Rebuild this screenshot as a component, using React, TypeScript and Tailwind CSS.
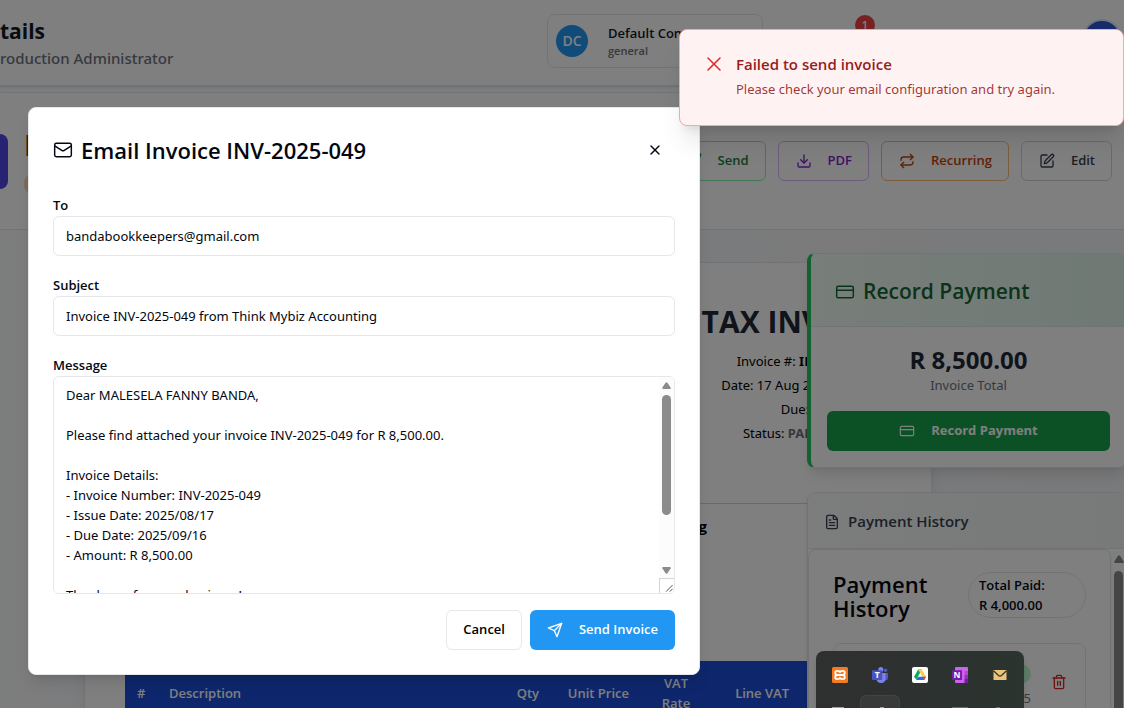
import React from "react";
import { CreditCard, Download, FileText, Mail, Repeat, SquarePen, Trash2, X } from "lucide-react";

const message = `Dear MALESELA FANNY BANDA,

Please find attached your invoice INV-2025-049 for R 8,500.00.

Invoice Details:
- Invoice Number: INV-2025-049
- Issue Date: 2025/08/17
- Due Date: 2025/09/16
- Amount: R 8,500.00

Thank you for your business!

Best regards`;

function SendIcon({ className }: { className?: string }) {
  return (
    <svg viewBox="0 0 24 24" fill="none" stroke="currentColor" strokeWidth="2" strokeLinecap="round" strokeLinejoin="round" className={className} aria-hidden="true">
      <path d="m22 2-7 20-4-9-9-4Z" />
      <path d="M22 2 11 13" />
    </svg>
  );
}

function Header() {
  return (
    <header className="flex h-[86px] items-start justify-between border-b border-gray-200 bg-white shadow-sm">
      <div className="pt-4">
        <h1 className="text-[21px] leading-[30px] font-bold text-[#111827]">tails</h1>
        <p className="font-['Noto_Sans'] text-[15px] leading-6 font-medium text-[#6b7280]">roduction Administrator</p>
      </div>
      <div className="flex items-start">
        <button type="button" className="mt-3.5 mr-[92px] flex h-[54px] w-[216px] items-center gap-5 rounded-lg border border-gray-200 px-2 text-left">
          <span className="flex size-8 items-center justify-center rounded-full bg-[#2196f3] text-sm font-semibold text-white">DC</span>
          <span className="block">
            <span className="block text-[13px] leading-5 font-semibold text-[#111827]">Default Company</span>
            <span className="block text-[11px] leading-4 font-semibold text-[#6b7280]">general</span>
          </span>
        </button>
        <span className="mt-[15px] flex size-5 items-center justify-center rounded-full bg-[#ef4444] text-[11px] font-semibold text-white">1</span>
        <span className="mt-[25px] ml-[25px] w-[184px] text-[13px] leading-5 font-semibold text-[#111827]">Production Administrator</span>
        <span className="mt-[21px] mr-1 size-9 rounded-full bg-[#2f55d4] ring-2 ring-blue-100" />
      </div>
    </header>
  );
}

function Toolbar() {
  const base = "flex h-10 items-center gap-4 rounded-md border pr-4 pl-[17px] text-[13px] font-semibold";
  return (
    <section className="mt-1.5 flex h-[138px] items-start justify-between border-y border-gray-200 bg-white">
      <div className="flex gap-4 pt-[41px]">
        <span className="h-[55px] w-2 rounded-r-xl bg-[#4f46e5]" />
        <div>
          <p className="text-[28px] leading-[22px] font-bold text-[#7c3d12]">INV</p>
          <span className="mt-4 block h-6 w-16 rounded-full bg-[#fed7aa]" />
        </div>
      </div>
      <div className="mt-12 mr-3 flex gap-3">
        <button type="button" className={`${base} border-[#86efac] text-[#15803d]`}>
          <SendIcon className="size-4" />Send
        </button>
        <button type="button" className={`${base} border-[#d8b4fe] text-[#7e22ce]`}>
          <Download className="size-4" />PDF
        </button>
        <button type="button" className={`${base} border-[#fdba74] text-[#c2410c]`}>
          <Repeat className="size-4" />Recurring
        </button>
        <button type="button" className={`${base} border-[#d1d5db] text-[#374151]`}>
          <SquarePen className="size-4" />Edit
        </button>
      </div>
    </section>
  );
}

function InvoicePaper() {
  return (
    <article className="-mr-[125px] ml-[84px] h-[520px] border border-gray-200 bg-white px-10 pt-11 shadow-lg">
      <div className="h-[196px] text-right text-[13px] leading-6 text-black">
        <h2 className="mb-3 text-[30px] leading-[30px] font-bold text-[#1f2937]">TAX INVOICE</h2>
        <div className="font-['Noto_Sans']">
          <p>Invoice #: <span className="font-bold">INV-2025-0049</span></p>
          <p>Date: 17 Aug 2025, 02:00:00</p>
          <p>Due: 16 Sept 2025</p>
          <p>Status: <span className="font-bold text-[#6b7280]">PARTIALLY PAID</span></p>
        </div>
      </div>
      <div className="-mx-10 h-[158px] border-t border-gray-300 pt-3 pr-[224px] text-right text-[15px] leading-5 font-bold text-black">
        Think Mybiz Accounting
      </div>
      <table className="w-full table-fixed bg-[#1d4ed8] text-[13px] leading-5 font-semibold text-white">
        <thead>
          <tr className="h-16">
            <th className="w-8 pl-3 text-left font-semibold">#</th>
            <th className="pl-3 text-left font-semibold">Description</th>
            <th className="w-[70px] pr-3 text-right font-semibold">Qty</th>
            <th className="w-[90px] pr-3 text-right font-semibold">Unit Price</th>
            <th className="w-[70px] px-4 text-center font-semibold">VAT Rate</th>
            <th className="w-[90px] pr-3 text-right font-semibold">Line VAT</th>
            <th className="w-[90px] pr-3 text-right font-semibold">Total</th>
          </tr>
        </thead>
      </table>
    </article>
  );
}

function PaymentSidebar() {
  return (
    <aside className="relative -mt-[9px] -mr-[3px] w-[320px] shrink-0">
      <section className="overflow-hidden rounded-lg border border-l-4 border-gray-200 border-l-[#22c55e] bg-white shadow-lg">
        <h2 className="flex h-[73px] items-center gap-2 border-b border-gray-200 bg-linear-to-r from-[#f0fdf4] to-[#dff3e9] pt-1 pl-6 text-[21px] font-semibold text-[#166534]">
          <CreditCard className="size-5" strokeWidth={1.75} />Record Payment
        </h2>
        <div className="px-4 pt-[18px] pb-4 text-center">
          <p className="text-[24px] leading-[30px] font-bold text-[#1f2937]">R 8,500.00</p>
          <p className="font-['Noto_Sans'] text-[13px] leading-5 text-[#6b7280]">Invoice Total</p>
          <button type="button" className="mt-4 flex h-10 w-full items-center justify-center gap-4 rounded-md bg-[#18a34a] text-[13px] font-bold text-white">
            <CreditCard className="size-4" strokeWidth={1.75} />Record Payment
          </button>
        </div>
      </section>
      <section className="mt-6 h-[240px] overflow-hidden rounded-lg border border-gray-200 bg-white shadow-md">
        <h2 className="flex h-14 items-center gap-2 border-b border-gray-200 bg-linear-to-r from-[#f8faf9] to-[#eff5f3] pt-0.5 pl-4 text-[15px] font-semibold text-[#374151]">
          <FileText className="size-4" />Payment History
        </h2>
        <div className="flex">
          <div className="h-[200px] flex-1 rounded-lg border border-gray-200 px-6 pt-[22px] shadow-sm">
            <div className="flex items-start justify-between">
              <h3 className="w-24 text-[22px] leading-6 font-semibold text-gray-950">Payment History</h3>
              <span className="w-[118px] rounded-full border border-gray-200 px-2.5 py-0.5 text-[13px] leading-5 font-semibold text-gray-950">
                Total Paid:<br />R 4,000.00
              </span>
            </div>
            <div className="mt-[23px] flex h-28 items-start rounded-lg border border-gray-200 pt-5">
              <div className="w-[197px] text-right text-[13px] leading-5 text-[#6b7280]">
                <span className="ml-auto block h-5 w-20 rounded-full bg-[#bbf7d0]" />
                <span className="mt-1 block">17/08/2025</span>
              </div>
              <button type="button" aria-label="Delete payment" className="mt-2.5 ml-5 text-[#dc2626]">
                <Trash2 className="size-4" />
              </button>
            </div>
          </div>
          <div className="flex w-[15px] flex-col items-center gap-2 pt-1.5" aria-hidden="true">
            <svg viewBox="0 0 10 8" className="h-2 w-2.5 fill-[#8b8b8b]"><path d="M4 .8Q5-.4 6 .8l3.7 5.6Q10 8 9 8H1Q0 8 .3 6.400Z" /></svg>
            <span className="h-48 w-[9px] rounded-full bg-[#8b8b8b]" />
          </div>
        </div>
      </section>
    </aside>
  );
}

function EmailDialog() {
  const field = "h-10 w-full rounded-md border border-gray-200 bg-white px-3 font-['Noto_Sans'] text-[13px] text-gray-950 outline-none";
  const label = "block h-6 text-[13px] leading-[26px] font-semibold";
  return (
    <div role="dialog" aria-labelledby="email-title" className="absolute top-[107px] left-7 w-[672px] rounded-lg border border-gray-200 bg-white p-6 text-gray-950 shadow-lg">
      <div className="flex h-9 items-center justify-between">
        <h2 id="email-title" className="flex items-center gap-2 text-[22px] leading-10 font-semibold">
          <Mail className="size-5" strokeWidth={1.75} />Email Invoice INV-2025-049
        </h2>
        <button type="button" aria-label="Close" className="flex size-10 items-center justify-center">
          <X className="size-4" />
        </button>
      </div>
      <form className="mt-6 space-y-4" onSubmit={(e) => e.preventDefault()}>
        <div>
          <label htmlFor="to" className={label}>To</label>
          <input id="to" type="email" defaultValue="bandabookkeepers@gmail.com" className={field} />
        </div>
        <div>
          <label htmlFor="subject" className={label}>Subject</label>
          <input id="subject" type="text" defaultValue="Invoice INV-2025-049 from Think Mybiz Accounting" className={field} />
        </div>
        <div>
          <label htmlFor="message" className={label}>Message</label>
          <div className="relative h-[218px] overflow-hidden rounded-md border border-gray-200">
            <textarea id="message" defaultValue={message} className="block h-full w-full resize-none bg-white px-3 py-2 font-['Noto_Sans'] text-[13px] leading-5 outline-none [scrollbar-width:none]" />
            <div className="absolute inset-y-0 right-0 flex w-[15px] flex-col items-center bg-[#fcfcfc] pt-[5px]" aria-hidden="true">
              <svg viewBox="0 0 10 8" className="h-[7px] w-[9px] fill-[#8b8b8b]"><path d="M4 .8Q5-.4 6 .8l3.700 5.600Q10 8 9 8H1Q0 8 .3 6.400Z" /></svg>
              <span className="mt-1.5 h-[120px] w-[9px] rounded-full bg-[#8b8b8b]" />
              <span className="flex-1" />
              <svg viewBox="0 0 10 8" className="mb-1 h-[7px] w-[9px] rotate-180 fill-[#8b8b8b]"><path d="M4 .8Q5-.4 6 .8l3.700 5.600Q10 8 9 8H1Q0 8 .3 6.400Z" /></svg>
              <svg viewBox="0 0 15 15" className="size-[15px] border-t border-l border-gray-300 bg-white" fill="none" stroke="#444"><path d="M6.500 13.500l7-7M10.500 13.500l3-3" /></svg>
            </div>
          </div>
        </div>
        <div className="flex justify-end gap-2 text-[13px] font-semibold">
          <button type="button" className="h-10 rounded-md border border-gray-200 px-4 text-black">Cancel</button>
          <button type="submit" className="flex h-10 items-center gap-4 rounded-md bg-[#2196f3] px-[17px] text-white">
            <SendIcon className="size-4" />Send Invoice
          </button>
        </div>
      </form>
    </div>
  );
}

function Toast() {
  return (
    <div role="alert" className="absolute top-[29px] right-0 flex h-[97px] w-[445px] gap-2.5 rounded-lg border border-[#fca5a5] bg-[#fef2f2] pt-[22px] pl-[22px] shadow-xl">
      <X className="size-6 text-[#dc2626]" strokeWidth={1.5} />
      <div className="text-[#991b1b]">
        <p className="text-[15px] leading-6 font-semibold">Failed to send invoice</p>
        <p className="font-['Noto_Sans'] text-[13px] leading-[26px] text-[#991b1b]/90">Please check your email configuration and try again.</p>
      </div>
    </div>
  );
}

function Tray() {
  return (
    <div className="absolute top-[651px] left-[816px] h-20 w-[208px] rounded-lg bg-linear-to-r from-[#2f2f2f] to-[#2b342f] px-4 pt-4 shadow-md">
      <div className="flex justify-between">
        <svg viewBox="0 0 16 16" className="size-4" aria-label="XAMPP">
          <rect width="16" height="16" rx="1.500" fill="#f47b20" />
          <path d="M8 5.500C7.500 3.200 3.200 3.200 3.200 6 3.200 8 5 8 5.500 8 5 8 3.200 8 3.200 10 3.200 12.800 7.500 12.800 8 10.500 8.500 12.800 12.800 12.800 12.800 10 12.800 8 11 8 10.500 8 11 8 12.800 8 12.800 6 12.800 3.200 8.500 3.200 8 5.500M5.500 8h5" fill="none" stroke="#fff" strokeWidth="1.800" />
        </svg>
        <svg viewBox="0 0 16 16" className="size-4" aria-label="Teams">
          <circle cx="13.500" cy="3.300" r="1.700" fill="#5059c9" />
          <circle cx="8.800" cy="2.500" r="2.500" fill="#7b83eb" />
          <path d="M10.500 6H16v4.500q0 3-3 3h-2.500Z" fill="#5059c9" />
          <path d="M4.500 6h9v5.500Q13.300 16 9 16q-4-.2-4.500-4Z" fill="#7b83eb" />
          <rect y="3.300" width="10.200" height="9.700" rx=".8" fill="#4b53bc" />
          <text x="5.100" y="11.200" textAnchor="middle" fill="#fff" fontSize="8.500" fontWeight="700">T</text>
        </svg>
        <svg viewBox="0 0 16 16" className="size-4" aria-label="Google Drive">
          <rect width="16" height="16" rx="2" fill="#fff" />
          <path d="M6.200 2.500h3.600L4.300 12.800 2 9.800Z" fill="#0da960" />
          <path d="M6.200 2.500h3.600L14 9.800h-3.700Z" fill="#ffcf48" />
          <path d="M5.900 9.800H14l-1.900 3.200H4.200Z" fill="#2d6fdd" />
          <path d="m12 9.800 2 0-1.900 3.200-1.900-3.200Z" fill="#ea4335" />
        </svg>
        <svg viewBox="0 0 16 16" className="size-4" aria-label="OneNote">
          <rect x="3" width="13" height="16" rx="1" fill="#ca64ea" />
          <path d="M12.500 4H16v4h-3.500Z" fill="#ae4bd5" />
          <path d="M12.500 8H16v4h-3.500Z" fill="#9332bf" />
          <path d="M12.500 12H16v3.500q0 .5-.5.5h-3Z" fill="#7719aa" />
          <rect y="3.300" width="10" height="9.700" rx=".8" fill="#7719aa" />
          <text x="5" y="11.200" textAnchor="middle" fill="#fff" fontSize="8.500" fontWeight="700">N</text>
        </svg>
        <svg viewBox="0 0 16 16" className="size-4" aria-label="Mail">
          <path d="M1.500 3h13v10h-13Z" fill="#ecc27c" />
          <path d="m1.500 3.800 5 4.700q1.500 1.300 3 0l5-4.700" fill="none" stroke="#2c322f" strokeWidth="1.200" />
        </svg>
      </div>
      <div className="-mx-3 mt-3 flex h-10 pl-10">
        <span className="h-10 w-10 rounded-md border border-white/5 bg-white/5" />
      </div>
      <div className="-mt-7 flex justify-between">
        <span className="h-4 w-3 bg-gray-400" />
        <span className="ml-2 h-4 w-1 bg-purple-400" />
        <span className="ml-10 size-4 bg-red-500" />
        <span className="mr-2 h-4 w-1 bg-cyan-600" />
      </div>
    </div>
  );
}

export default function App() {
  return (
    <div className="relative h-screen overflow-hidden bg-slate-50 font-['Open_Sans','Noto_Sans',sans-serif]">
      <Header />
      <Toolbar />
      <main className="flex items-start bg-linear-to-r from-slate-50 to-gray-100 pt-8">
        <div className="min-w-0 flex-1">
          <InvoicePaper />
        </div>
        <PaymentSidebar />
      </main>
      <div className="absolute inset-0 bg-black/50" />
      <EmailDialog />
      <Toast />
      <Tray />
    </div>
  );
}
